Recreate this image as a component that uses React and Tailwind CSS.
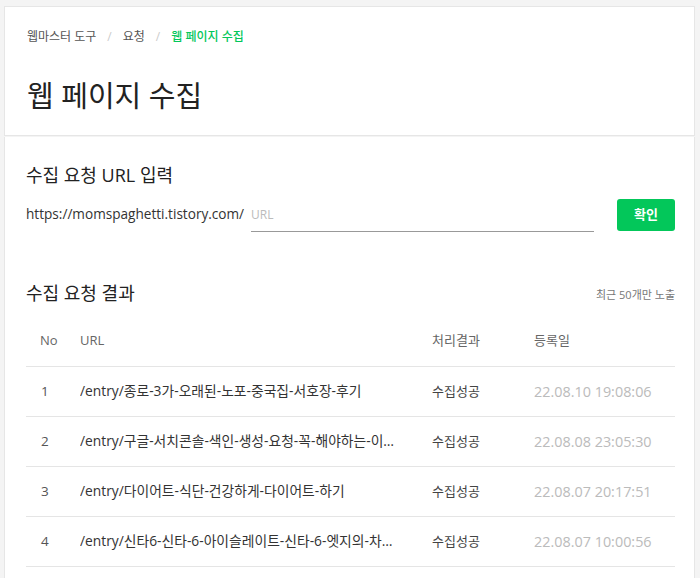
const rows = [
  { no: 1, url: '/entry/종로-3가-오래된-노포-중국집-서호장-후기', date: '22.08.10 19:08:06' },
  { no: 2, url: '/entry/구글-서치콘솔-색인-생성-요청-꼭-해야하는-이유와-방법', date: '22.08.08 23:05:30' },
  { no: 3, url: '/entry/다이어트-식단-건강하게-다이어트-하기', date: '22.08.07 20:17:51' },
  { no: 4, url: '/entry/신타6-신타-6-아이슬레이트-신타-6-엣지의-차이점', date: '22.08.07 10:00:56' },
]

export default function App() {
  return (
    <div
      className="min-h-[578px] bg-[#f4f4f4] pl-1 pr-[5px] pt-1.5 text-[#333]"
      style={{ fontFamily: '"Open Sans", "Noto Sans CJK KR", sans-serif' }}
    >
      {/* header */}
      <div className="border border-[#e6e6e6] bg-white px-[22px] pt-[21px] pb-[19px]">
        <nav className="flex items-center text-[12px] leading-[18px] text-[#555]">
          <span>웹마스터 도구</span>
          <span className="px-[11px] text-[#ccc]">/</span>
          <span>요청</span>
          <span className="px-[11px] text-[#ccc]">/</span>
          <span className="font-medium text-[#03c75a]">웹 페이지 수집</span>
        </nav>
        <h1 className="mt-[30px] text-[29px] leading-[40px] text-[#222]">웹 페이지 수집</h1>
      </div>

      {/* content */}
      <div className="mt-px border border-t-0 border-[#e6e6e6] bg-white pl-[21px] pr-[19px] pt-[25px] pb-4">
        <h2 className="text-[18px] leading-[26px] text-[#222]">수집 요청 URL 입력</h2>
        <div className="mt-[11px] flex items-start">
          <span className="mt-[5px] text-[13.6px] leading-[20px] text-[#333]">https://momspaghetti.tistory.com/</span>
          <input
            placeholder="URL"
            className="ml-[7px] h-[33px] w-[343px] border-b border-[#999] pb-[1px] text-[12px] outline-none placeholder:text-[#bbb]"
          />
          <button className="ml-auto h-8 w-[58px] rounded-[3px] bg-[#03c75a] text-[13px] font-bold text-white">
            확인
          </button>
        </div>

        <div className="mt-[48px] flex items-end justify-between">
          <h2 className="text-[18px] leading-[26px] text-[#222]">수집 요청 결과</h2>
          <span className="mb-[3px] text-[11px] text-[#777]">최근 50개만 노출</span>
        </div>

        <div className="mt-[10px] text-[13px]">
          <div className="grid h-[51px] grid-cols-[54px_352px_102px_1fr] items-center border-b border-[#e5e5e5] text-[#666]">
            <span className="pl-[14px]">No</span>
            <span>URL</span>
            <span>처리결과</span>
            <span>등록일</span>
          </div>
          {rows.map((r) => (
            <div
              key={r.no}
              className="grid h-[50px] grid-cols-[54px_352px_102px_1fr] items-center border-b border-[#e5e5e5]"
            >
              <span className="pl-[15px] text-[13.5px] text-[#555]">{r.no}</span>
              <span className="min-w-0 pr-[36px]">
                <span className="block truncate text-[13.8px] text-[#333]">{r.url}</span>
              </span>
              <span className="text-[#444]">수집성공</span>
              <span className="text-[14.4px] text-[#bbb]">{r.date}</span>
            </div>
          ))}
        </div>
      </div>
    </div>
  )
}
